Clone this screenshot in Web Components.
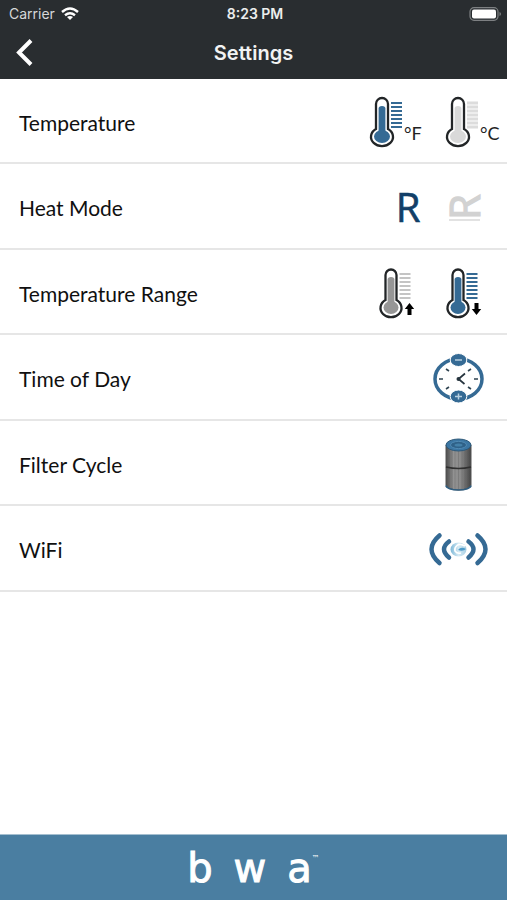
<!DOCTYPE html>
<html lang="en">
<head>
<meta charset="utf-8">
<meta name="viewport" content="width=device-width, initial-scale=1">
<title>Settings</title>
<style>
  html, body { margin: 0; height: 100%; }
  body { background: #fff; }
</style>
</head>
<body>
<spa-app></spa-app>

<script>
const define = (name, html, setup) => {
  const template = document.createElement('template');
  template.innerHTML = html;
  customElements.define(name, class extends HTMLElement {
    constructor() {
      super();
      this.attachShadow({ mode: 'open' }).append(template.content.cloneNode(true));
    }
    connectedCallback() { if (setup) setup(this, this.shadowRoot); }
  });
};

define('status-bar', `
  <style>
    :host { display: grid; grid-template-columns: 1fr auto 1fr; align-items: center; height: 27px;
      padding: 0 6px 0 9px; font: 14px/18px Inter, "Liberation Sans", sans-serif; color: #d6d8d9; }
    .net { display: flex; align-items: center; gap: 6px; }
    .time { font-size: 14px; font-weight: 600; color: #eceded; }
    .battery { justify-self: end; }
    svg { display: block; }
  </style>
  <div class="net"><span>Carrier</span>
    <svg width="18" height="14" viewBox="0 0 18 14" fill="none" stroke="#fff" stroke-width="2.400" aria-hidden="true">
      <path d="M1 5Q9-2 17 5M4 8.300q5-4 10 0"/><path d="M9 13L6 10q3-2 6 0z" fill="#fff" stroke="none"/>
    </svg></div>
  <span class="time">8:23 PM</span>
  <svg class="battery" width="32" height="14" viewBox="0 0 32 14" aria-hidden="true">
    <rect x="1" y=".7" width="28" height="12.6" rx="4" fill="none" stroke="#7d8082" stroke-width="1.2"/>
    <rect x="3" y="2.6" width="24" height="8.8" rx="2" fill="#fff"/>
    <path d="M30.5 5v4q1.500-.5 1.500-2t-1.500-2" fill="#7d8082"/>
  </svg>`);

define('nav-bar', `
  <style>
    :host { display: grid; grid-template-columns: 1fr auto 1fr; align-items: center; height: 52px;
      font-family: Inter, "Liberation Sans", sans-serif; color: #f2f3f3; }
    button { width: 48px; height: 48px; padding: 0; border: 0; background: none; }
    svg { display: block; }
    h1 { margin: 0; font-size: 20px; line-height: 26px; font-weight: 600; }
  </style>
  <button type="button" aria-label="Back">
    <svg width="48" height="48" viewBox="0 0 48 48" fill="none" stroke="#fff" stroke-width="4" aria-hidden="true">
      <path d="M31 11.500L19 23.500L31 35.500"/></svg>
  </button>
  <h1><slot></slot></h1>`);

define('setting-row', `
  <style>
    :host { display: flex; align-items: center; box-sizing: border-box; height: 85px;
      padding: 0 6px 0 19px; border-bottom: 2px solid #e6e6e6;
      font: 21px/28px Lato, "Liberation Sans", sans-serif; color: #101010; }
    :host(:nth-of-type(even)) { height: 86px; }
    :host([single]) { padding-right: 14px; }
    .label { flex: 1; padding-top: 4px; }
    .options { display: flex; }
  </style>
  <div class="label"><slot></slot></div>
  <div class="options"><slot name="option"></slot></div>`);

define('icon-button', `
  <style>
    :host { display: block; }
    button { display: block; width: 68px; height: 60px; padding: 0; border: 0; background: none; }
    svg { display: block; overflow: visible; }
    text { font-family: Lato, "Liberation Sans", sans-serif; }
    .letter { font-family: "Open Sans", "Noto Sans", sans-serif; }
  </style>
  <button type="button"><svg width="68" height="60" viewBox="0 0 68 60" aria-hidden="true"></svg></button>`,
  (host, root) => {
    root.querySelector('button').setAttribute('aria-label', host.getAttribute('label'));
    root.querySelector('svg').innerHTML = icons[host.getAttribute('icon')];
  });

const thermometer = (x, fill, lines, half, extra, weight = 2) => {
  const rx = half + 4;
  const ticks = [12, 16, 20, 24, 28, 32, 36].map(y => `M${half + 3} ${y}h11`).join('');
  return `<g transform="translate(${x} 0)">
    <path d="M${-half} 38V13a${half} ${half} 0 0 1 ${2 * half} 0V38a${rx + 1} 9.300 0 1 1 ${-2 * half} 0z"
      fill="#fff" stroke="#222527" stroke-width="2.300"/>
    <path d="M-3.400 41V17.500q0-2.500 3.400-2.500t3.400 2.500V41z" fill="${fill}"/>
    <ellipse cx="0" cy="45.500" rx="${rx - 2}" ry="6.500" fill="${fill}"/>
    <path d="${ticks}" stroke="${lines}" stroke-width="${weight}"/>${extra}</g>`;
};
const unit = t => `<text x="22" y="49" font-size="18" fill="#222">${t}</text>`;
const blue = '#356a94';

const icons = {
  fahrenheit: thermometer(17, blue, blue, 6, unit('°F')),
  celsius: thermometer(25, '#d9d9d9', '#dcdcdc', 6, unit('°C'), 3),
  rangeHigh: thermometer(26, '#969696', '#c4c4c4', 5.5,
    '<path d="M18.500 41l4.700 6h-2.700v6h-4v-6h-2.700z" fill="#000"/>'),
  rangeLow: thermometer(25, blue, blue, 5.5,
    '<path d="M18.500 53l4.700-6h-2.700v-6h-4v6h-2.700z" fill="#000"/>'),
  ready: `<text class="letter" x="43" y="46" text-anchor="middle" font-size="40" fill="#123f68" stroke="#123f68" stroke-width=".6">R</text>`,
  rest: `<g fill="#d2d2d2" transform="translate(47 44) rotate(-90)">
    <path d="M0-31v31" stroke="#e2e2e2" stroke-width="2"/>
    <text class="letter" x="0" y="0" font-size="42" stroke="#d2d2d2" stroke-width="1.200">R</text></g>`,
  clock: `<ellipse cx="33.500" cy="32" rx="23.500" ry="20" fill="#fff" stroke="${blue}" stroke-width="3.500"/>
    <path d="M14 32h4M49 32h4M21 22l3 2M21 42l3-2M46 22l-3 2M46 42l-3-2" stroke="#2f4350" stroke-width="1.600"/>
    <path d="M40 26.500L33.500 32l6 5" fill="none" stroke="#26343e" stroke-width="1.700"/>
    <circle cx="33.500" cy="32" r="2" fill="#26343e"/>
    <g fill="${blue}" stroke="#fff" stroke-width="1"><ellipse cx="33.500" cy="13" rx="8.300" ry="6.500"/>
    <ellipse cx="33.500" cy="49.500" rx="8.300" ry="6.500"/></g>
    <path d="M30 13h7M30 49.500h7M33.500 46.500v6" stroke="#b8d0e0" stroke-width="1.500"/>`,
  filter: `<defs><linearGradient id="metal"><stop offset="0" stop-color="#4c4c4c"/>
      <stop offset=".3" stop-color="#929292"/><stop offset=".6" stop-color="#8a8a8a"/>
      <stop offset="1" stop-color="#444"/></linearGradient></defs>
    <path d="M21 12V52a12.500 5 0 0 0 25 0V12z" fill="url(#metal)" stroke="#555"/>
    <path d="M24 15v39M27 16v40M30 17v40M33.500 17v40M37 17v40M40 16v40M43 15v39" stroke="#555" stroke-opacity=".3"/>
    <path d="M21 34q12.500 3 25 0" fill="none" stroke="#303030" stroke-width="1.600"/>
    <path d="M21 52.500a12.500 4.500 0 0 0 25 0" fill="none" stroke="#315e80" stroke-width="1.600"/>
    <ellipse cx="33.500" cy="12" rx="12.500" ry="6" fill="#3b76a3" stroke="#2d5878"/>
    <ellipse cx="33.500" cy="12" rx="8" ry="3.600" fill="#2f6188" stroke="#5089b2"/>
    <ellipse cx="33.500" cy="12" rx="4" ry="1.600" fill="#4480a8"/>`,
  wifi: `<defs><linearGradient id="orb"><stop offset="0" stop-color="#7db8d8"/>
      <stop offset=".5" stop-color="#d5eaf4"/><stop offset="1" stop-color="#a9d0e4"/></linearGradient></defs>
    <g fill="none" stroke="${blue}" stroke-width="4.500" stroke-linecap="round">
    <path d="M14.500 17.500Q-1.500 31 14.500 45M52.500 17.500Q68.500 31 52.500 45"/>
    <path d="M24 23.500Q14 31 24 39.500M43.500 23.500Q53.500 31 43.500 39.500"/></g>
    <ellipse cx="33.500" cy="31.500" rx="8" ry="7" fill="url(#orb)"/>
    <path d="M40 28q-5-3-8-.5t-2 5.500q2 3 6 2" fill="none" stroke="#fff" stroke-width="1.600"/>
    <path d="M33 32q3-4 8-1-3 3-8 1z" fill="#4d9bc9"/>`
};

define('brand-footer', `
  <style>
    :host { display: flex; justify-content: center; align-items: center; box-sizing: border-box; height: 66px;
      border-top: 1px solid #a5bfd0; background: #4a7ea1; color: #fff;
      font: 40px/48px "DejaVu Sans", sans-serif; }
    .mark { display: flex; gap: 21px; }
    .mark span { -webkit-text-stroke: 1px #fff; }
    sup { align-self: flex-start; font-size: 8px; line-height: 8px; padding-top: 20px; }
  </style>
  <div class="mark"><span>b</span><span>w</span><span>a</span></div><sup>™</sup>`);

define('spa-app', `
  <style>
    :host { display: flex; flex-direction: column; min-height: 100vh; }
    header { background: #292d30; }
    main { flex: 1; }
  </style>
  <header><status-bar></status-bar><nav-bar>Settings</nav-bar></header>
  <main>
    <setting-row>Temperature
      <icon-button slot="option" icon="fahrenheit" label="Fahrenheit"></icon-button>
      <icon-button slot="option" icon="celsius" label="Celsius"></icon-button></setting-row>
    <setting-row>Heat Mode
      <icon-button slot="option" icon="ready" label="Ready"></icon-button>
      <icon-button slot="option" icon="rest" label="Rest"></icon-button></setting-row>
    <setting-row>Temperature Range
      <icon-button slot="option" icon="rangeHigh" label="High range"></icon-button>
      <icon-button slot="option" icon="rangeLow" label="Low range"></icon-button></setting-row>
    <setting-row single>Time of Day
      <icon-button slot="option" icon="clock" label="Set time"></icon-button></setting-row>
    <setting-row single>Filter Cycle
      <icon-button slot="option" icon="filter" label="Filter cycle"></icon-button></setting-row>
    <setting-row single>WiFi
      <icon-button slot="option" icon="wifi" label="WiFi settings"></icon-button></setting-row>
  </main>
  <brand-footer></brand-footer>`);
</script>
</body>
</html>
